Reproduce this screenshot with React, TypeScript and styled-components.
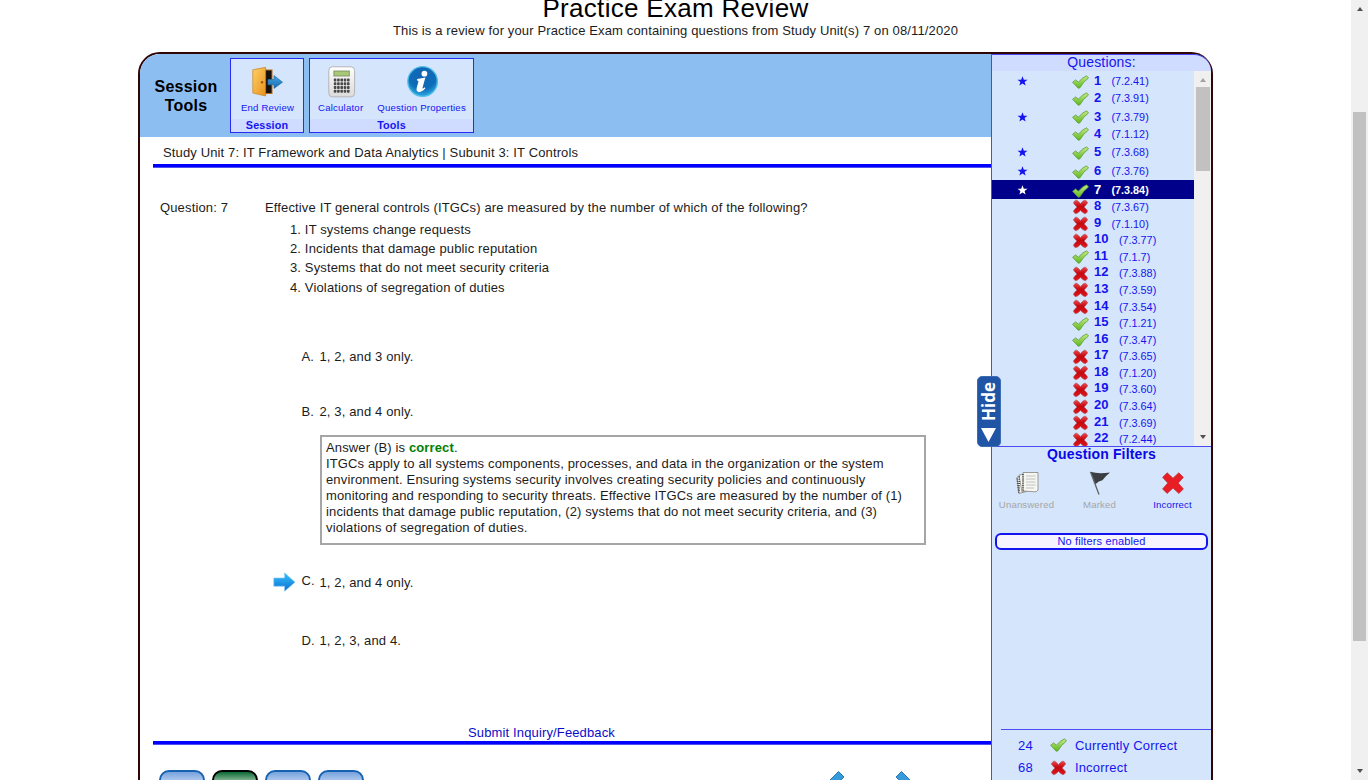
import React from "react";
import styled, { createGlobalStyle } from "styled-components";

const Global = createGlobalStyle`
  * { box-sizing: border-box; }
  html, body { margin: 0; padding: 0; background: #fff; overflow: hidden; }
  body { font-family: "Liberation Sans", Arial, sans-serif; font-size: 13px; letter-spacing: 0.14px; color: #1c1c1c; }
`;

const Page = styled.div`
  display: flex;
  width: 1368px;
  height: 780px;
  overflow: hidden;
`;
const Content = styled.div`
  flex: 1;
  min-width: 0;
  overflow: hidden;
`;
const Title = styled.h1`
  margin: -7px 0 0;
  height: 29px;
  line-height: 30px;
  font-size: 26px;
  font-weight: 400;
  letter-spacing: 0.3px;
  text-align: center;
  color: #000;
`;
const Subtitle = styled.p`
  margin: 0;
  height: 30px;
  line-height: 18px;
  text-align: center;
`;

const ScrollTrack = styled.div<{ $w: number; $pad: number }>`
  width: ${(p) => p.$w}px;
  flex: none;
  background: #f0f0f0;
  display: flex;
  flex-direction: column;
  align-items: center;
  padding: ${(p) => p.$pad}px 0;
`;
const Thumb = styled.div<{ $top: number; $h: number; $w: number }>`
  width: ${(p) => p.$w}px;
  height: ${(p) => p.$h}px;
  margin-top: ${(p) => p.$top}px;
  background: #c1c1c1;
`;
const ScrollArrow = styled.i<{ $down?: boolean; $color: string }>`
  width: 0;
  height: 0;
  border: 3.5px solid transparent;
  border-top: ${(p) => (p.$down ? `4px solid ${p.$color}` : "0")};
  border-bottom: ${(p) => (p.$down ? "0" : `4px solid ${p.$color}`)};
  margin-top: ${(p) => (p.$down ? "auto" : "0")};
`;

const Frame = styled.div`
  position: relative;
  display: flex;
  width: 1075px;
  height: 760px;
  margin-left: 138px;
  border: 2px solid #300505;
  border-radius: 22px;
`;
const Main = styled.main`
  width: 851px;
  flex: none;
  display: flex;
  flex-direction: column;
`;
const Toolbar = styled.div`
  height: 83px;
  flex: none;
  display: flex;
  align-items: flex-start;
  padding-top: 4px;
  background: #8dbef2;
  border-top-left-radius: 20px;
`;
const ToolbarTitle = styled.div`
  width: 90px;
  padding: 19px 0 0 2px;
  font-weight: 700;
  font-size: 16px;
  line-height: 19px;
  letter-spacing: 0.2px;
  text-align: center;
  color: #000;
`;
const Group = styled.div<{ $w: number }>`
  width: ${(p) => p.$w}px;
  height: 75px;
  margin-right: 5px;
  display: flex;
  flex-direction: column;
  border: 1px solid #2a2af5;
  background: #d5e5fb;
`;
const GroupTools = styled.div`
  flex: 1;
  display: flex;
  justify-content: center;
  gap: 14px;
  padding-left: 1px;
`;
const Tool = styled.div`
  display: flex;
  flex-direction: column;
  align-items: center;
  font-size: 9.6px;
  line-height: 12px;
  letter-spacing: 0.2px;
  color: #1414f5;
  white-space: nowrap;
  svg { margin: 5.5px 0 1px; height: 34px; display: block; }
  span { margin-top: 2px; }
`;
const GroupName = styled.div`
  height: 13px;
  line-height: 13px;
  font-size: 10.8px;
  font-weight: 700;
  text-align: center;
  color: #1414f5;
  background: #cfdcff;
`;
const Crumb = styled.div`
  height: 27px;
  flex: none;
  padding-left: 23px;
  line-height: 31px;
`;
const Rule = styled.div`
  height: 4px;
  flex: none;
  margin-left: 13px;
  background: linear-gradient(#00f 0 3px, #5050ee 3px);
`;
const QuestionRow = styled.div`
  display: flex;
  padding: 32px 0 0 20px;
  line-height: 16px;
`;
const QuestionLabel = styled.div`
  width: 105px;
`;
const Statements = styled.ol`
  margin: 4px 0 0.4px;
  padding: 0 0 0 25px;
  line-height: 19.2px;
  list-style: none;
`;
const Choices = styled.div`
  padding-left: 133px;
`;
const Choice = styled.div<{ $top: number }>`
  display: flex;
  height: 16px;
  margin-top: ${(p) => p.$top}px;
  line-height: 16px;
`;
const Marker = styled.div`
  width: 28.5px;
  svg { display: block; margin-top: -3.5px; }
`;
const Letter = styled.div<{ $raise?: boolean }>`
  width: 18px;
  margin-top: ${(p) => (p.$raise ? -2 : 0)}px;
`;
const Explanation = styled.div`
  width: 606px;
  height: 110px;
  margin: 15px 0 0 47px;
  padding: 3px 4px;
  border: 2px solid #a6a6a6;
  line-height: 16px;
  white-space: nowrap;
  b { color: #008000; }
`;
const Feedback = styled.a`
  margin: auto 0 0;
  height: 16px;
  line-height: 16px;
  padding-left: 328px;
  color: #0c0cc8;
`;
const Footer = styled.div`
  height: 65px;
  flex: none;
  display: flex;
  padding: 25px 0 0 19px;
`;
const FooterButton = styled.div<{ $green?: boolean }>`
  width: 46px;
  height: 40px;
  margin-right: 7px;
  border: 2px solid ${(p) => (p.$green ? "#000" : "#1763b2")};
  border-radius: 10px;
  background: ${(p) => (p.$green ? "linear-gradient(#0a6a35, #8cb898 9px, #b5d3bd)" : "linear-gradient(#76a2dc, #b0caee 9px, #d2e2f8)")};
`;
const Chevrons = styled.svg`
  margin: 0 0 0 442px;
`;

const Sidebar = styled.aside`
  flex: 1;
  min-width: 0;
  display: flex;
  flex-direction: column;
  border-left: 1px solid #4a4af0;
  background: #d5e5fb;
  border-top-right-radius: 20px;
  color: #1414f0;
`;
const SideHead = styled.div`
  height: 17px;
  flex: none;
  border-top: 1px solid #4a4af0;
  border-top-right-radius: 20px;
  background: #cfdcff;
  line-height: 14px;
  font-size: 14px;
  letter-spacing: 0.15px;
  text-align: center;
`;
const ListBox = styled.div`
  height: 376px;
  flex: none;
  display: flex;
  overflow: hidden;
  border-bottom: 1px solid #4a4af0;
`;
const List = styled.div`
  flex: 1;
  overflow: hidden;
`;
const Row = styled.div<{ $star: boolean; $on: boolean }>`
  display: flex;
  align-items: center;
  height: ${(p) => (p.$star ? 18.9 : 16.6)}px;
  padding-top: ${(p) => (p.$star ? 2 : 0)}px;
  background: ${(p) => (p.$on ? "#00008b" : "transparent")};
  color: ${(p) => (p.$on ? "#fff" : "inherit")};
  font-weight: ${(p) => (p.$on ? 700 : 400)};
`;
const Star = styled.div`
  width: 80px;
  padding-left: 25px;
  svg { display: block; }
`;
const Mark = styled.div`
  width: 22px;
  svg { display: block; margin-top: 1px; }
`;
const Num = styled.div<{ $wide: boolean; $raise: boolean }>`
  width: ${(p) => (p.$wide ? 25 : 17.5)}px;
  font-weight: 700;
  line-height: 15px;
  margin-top: ${(p) => (p.$raise ? -3 : -1)}px;
`;
const Code = styled.div`
  font-size: 10.8px;
  line-height: 14px;
  letter-spacing: 0;
`;
const FilterTitle = styled.div`
  height: 16px;
  line-height: 15px;
  font-size: 14px;
  font-weight: 700;
  text-align: center;
  color: #0808e8;
`;
const Filters = styled.div`
  display: flex;
  height: 70px;
  margin-left: -2px;
  padding-top: 8px;
`;
const Filter = styled.div<{ $off?: boolean }>`
  width: 73px;
  flex: none;
  display: flex;
  flex-direction: column;
  align-items: center;
  font-size: 9.6px;
  line-height: 12px;
  color: ${(p) => (p.$off ? "#a5a5a5" : "#1414f0")};
  svg { display: block; margin-bottom: 4px; }
`;
const FilterState = styled.div`
  height: 17px;
  margin: 0 3px;
  border: 2px solid #1414f0;
  border-radius: 6px;
  background: #f6f5ff;
  font-size: 11px;
  line-height: 13px;
  text-align: center;
`;
const Summary = styled.div`
  margin: 179px 0 0 9px;
  padding-top: 4px;
  border-top: 1px solid #4a4af0;
`;
const SummaryRow = styled.div`
  display: flex;
  align-items: center;
  height: 22.5px;
  padding-left: 17px;
  letter-spacing: 0.2px;
  svg { width: 17px; margin: 0 7.5px 0 17.5px; }
`;
const HideTab = styled.div`
  position: absolute;
  left: 837px;
  top: 322px;
  width: 24px;
  height: 71px;
  padding: 3px 1px 0 0;
  display: flex;
  flex-direction: column;
  align-items: center;
  border: 1px solid #3c6cb4;
  border-radius: 5px;
  background: #2055a6;
  color: #fff;
  span {
    height: 41px;
    writing-mode: vertical-rl;
    transform: rotate(180deg);
    font: 700 17px/22px "Open Sans", sans-serif;
    letter-spacing: 0;
  }
  svg { display: block; margin-top: 7px; }
`;

const Check = () => (
  <svg width="17" height="14" viewBox="0 0 17 14">
    <defs>
      <linearGradient id="ck" x1="0" y1="0" x2="0" y2="1">
        <stop offset="0" stopColor="#c5ea86" />
        <stop offset="1" stopColor="#5cb81c" />
      </linearGradient>
    </defs>
    <path d="M0.6 7.3 3.6 4.9 6.4 7.2 Q10 2.6 14.6 .8 L16.5 3 Q11.2 6.8 7.8 12.9 L6.2 13.2Z" fill="url(#ck)" stroke="#609a3c" strokeWidth=".8" strokeLinejoin="round" />
  </svg>
);
const Cross = () => (
  <svg width="17" height="16" viewBox="0 0 16 16" preserveAspectRatio="none">
    <defs>
      <linearGradient id="cr" x1="0" y1="0" x2="0" y2="1">
        <stop offset="0" stopColor="#f0484c" />
        <stop offset=".45" stopColor="#c40810" />
        <stop offset="1" stopColor="#e0161c" />
      </linearGradient>
    </defs>
    <path d="M3.3 1.3Q4.5.9 5.5 2L8 4.5 10.4 2Q11.6.9 12.9 1.4L14.5 3Q14.8 4.3 13.6 5.4L11.4 8 13.8 10.6Q14.9 11.8 14.3 13.1L13 14.5Q11.6 14.9 10.5 13.8L8 11.5 5.5 13.8Q4.3 14.9 3 14.5L1.6 13.1Q1.2 11.8 2.3 10.6L4.6 8 2.3 5.4Q1.2 4.3 1.6 3Z" fill="url(#cr)" stroke="#b25a62" strokeWidth=".7" />
  </svg>
);
const StarIcon = () => (
  <svg width="11" height="10" viewBox="0 0 11 10">
    <path d="M5.5.3 6.8 3.7 10.5 3.8 7.6 6 8.6 9.6 5.5 7.5 2.4 9.6 3.4 6 .5 3.8 4.2 3.7Z" fill="currentColor" />
  </svg>
);
const Door = () => (
  <svg width="34" viewBox="0 0 34 34">
    <defs>
      <linearGradient id="dr" x1="0" y1="0" x2="1" y2="1">
        <stop offset="0" stopColor="#ffd068" />
        <stop offset="1" stopColor="#e8921c" />
      </linearGradient>
      <linearGradient id="da" x1="0" y1="0" x2="0" y2="1">
        <stop offset="0" stopColor="#48a8e0" />
        <stop offset="1" stopColor="#1668b0" />
      </linearGradient>
    </defs>
    <path d="M14 4.5H22.5V29H14Z" fill="#b86c18" />
    <path d="M15 5.5H21.5V28H15Z" fill="#18120c" />
    <path d="M2.8 4.8 15.6 2.3V31L2.8 28Z" fill="url(#dr)" stroke="#c98220" strokeWidth=".7" />
    <circle cx="12" cy="17.3" r="1.2" fill="#9a5510" />
    <path d="M18 14.6H24V10.6L32.5 17.2 24 23.4V19.8H18Z" fill="url(#da)" stroke="#1f70ad" strokeWidth=".7" />
  </svg>
);
const Calculator = () => (
  <svg width="34" viewBox="0 0 34 34">
    <defs>
      <linearGradient id="cl" x1="0" y1="0" x2="0" y2="1">
        <stop offset="0" stopColor="#fff" />
        <stop offset="1" stopColor="#dadada" />
      </linearGradient>
    </defs>
    <rect x="4.8" y="1.8" width="25.8" height="30" rx="3.5" fill="url(#cl)" stroke="#b6b6b6" />
    <rect x="9.9" y="6" width="15.4" height="5" fill="#a8c878" stroke="#758b58" strokeWidth=".8" />
    {[13.4, 17.2, 21, 24.8].map((y) =>
      [9.8, 13.1, 16.4, 19.7, 23].map((x) => (
        <rect key={`${x}-${y}`} x={x} y={y} width="2.6" height="3" rx=".7" fill="#484848" />
      ))
    )}
  </svg>
);
const Info = () => (
  <svg width="34" viewBox="0 0 34 34">
    <defs>
      <radialGradient id="in" cx=".5" cy=".3" r=".75">
        <stop offset="0" stopColor="#1265b4" />
        <stop offset=".6" stopColor="#0e6cb8" />
        <stop offset="1" stopColor="#35b6ec" />
      </radialGradient>
    </defs>
    <circle cx="17.6" cy="16.5" r="14.8" fill="url(#in)" stroke="#55bfe8" strokeWidth="1.3" />
    <circle cx="19.4" cy="8.7" r="2.9" fill="#fff" />
    <path d="M12.2 13.9Q16.5 13.2 20.4 12.4L17.6 22.5Q17.2 24.4 19.8 22.2L20.4 23.3Q16.6 27.6 13.4 27 10.8 26.2 11.8 22.6L13.4 16.8Q13.6 15.4 12 15.4Z" fill="#fff" />
  </svg>
);
const Papers = () => (
  <svg width="26" height="24" viewBox="0 0 26 24">
    <g fill="#f5f5f2" stroke="#85857f" strokeWidth=".8">
      <path d="M3 6 14 4V20L5 22.5Z" />
      <path d="M5 4 16 2.5V19L8 21Z" />
      <path d="M9 1.5H24V19Q23 21 21 20.8L9 20Z" />
    </g>
    <path d="M12 5H21.5M12 8H21.5M12 11H21.5M12 14H21.5M12 17H20" stroke="#b4b4b0" strokeWidth=".8" />
    <path d="M9 3V20M5.2 5.5V21M3 7.5 4.8 22" stroke="#444" strokeWidth="1.5" strokeDasharray="1 1.2" />
  </svg>
);
const Flag = () => (
  <svg width="22" height="24" viewBox="0 0 22 24">
    <path d="M1.5.8Q9 3.2 21 1.5Q16 5.5 13.4 9.2 9.8 9.5 6.4 13.2Z" fill="#3b3f41" />
    <path d="M1.5 1 10 23.4" stroke="#606466" strokeWidth="1.3" />
  </svg>
);
const RedX = () => (
  <svg width="24" height="24" viewBox="0 0 24 24">
    <path d="M6.2 1.8 12 7.2 17.8 1.8 22.4 6.3 17.2 12.1 22.4 17.9 17.9 22.4 12 17.1 6.1 22.4 1.6 17.9 6.8 12.1 1.6 6.3Z" fill="#e81e24" stroke="#bd343a" strokeWidth=".8" strokeLinejoin="round" />
  </svg>
);
const Arrow = () => (
  <svg width="23" height="20" viewBox="0 0 23 20">
    <defs>
      <linearGradient id="ar" x1="0" y1="0" x2="0" y2="1">
        <stop offset="0" stopColor="#38c4ff" />
        <stop offset="1" stopColor="#0a6cd0" />
      </linearGradient>
    </defs>
    <path d="M.8 6H11.6V.8L22 10.2 11.6 19.2V14.2H.8Z" fill="url(#ar)" stroke="#80c8f4" strokeWidth=".6" />
  </svg>
);

const questions: [number, string, boolean, boolean][] = [
  [1, "7.2.41", true, true],
  [2, "7.3.91", true, false],
  [3, "7.3.79", true, true],
  [4, "7.1.12", true, false],
  [5, "7.3.68", true, true],
  [6, "7.3.76", true, true],
  [7, "7.3.84", true, true],
  [8, "7.3.67", false, false],
  [9, "7.1.10", false, false],
  [10, "7.3.77", false, false],
  [11, "7.1.7", true, false],
  [12, "7.3.88", false, false],
  [13, "7.3.59", false, false],
  [14, "7.3.54", false, false],
  [15, "7.1.21", true, false],
  [16, "7.3.47", true, false],
  [17, "7.3.65", false, false],
  [18, "7.1.20", false, false],
  [19, "7.3.60", false, false],
  [20, "7.3.64", false, false],
  [21, "7.3.69", false, false],
  [22, "7.2.44", false, false],
];

export default function App() {
  return (
    <Page>
      <Global />
      <Content>
        <Title>Practice Exam Review</Title>
        <Subtitle>This is a review for your Practice Exam containing questions from Study Unit(s) 7 on 08/11/2020</Subtitle>
        <Frame>
          <Main>
            <Toolbar>
              <ToolbarTitle>Session<br />Tools</ToolbarTitle>
              <Group $w={74}>
                <GroupTools>
                  <Tool><Door /><span>End Review</span></Tool>
                </GroupTools>
                <GroupName>Session</GroupName>
              </Group>
              <Group $w={165}>
                <GroupTools>
                  <Tool><Calculator /><span>Calculator</span></Tool>
                  <Tool><Info /><span>Question Properties</span></Tool>
                </GroupTools>
                <GroupName>Tools</GroupName>
              </Group>
            </Toolbar>
            <Crumb>Study Unit 7: IT Framework and Data Analytics | Subunit 3: IT Controls</Crumb>
            <Rule />
            <QuestionRow>
              <QuestionLabel>Question: 7</QuestionLabel>
              <div>
                Effective IT general controls (ITGCs) are measured by the number of which of the following?
                <Statements>
                  <li>1. IT systems change requests</li>
                  <li>2. Incidents that damage public reputation</li>
                  <li>3. Systems that do not meet security criteria</li>
                  <li>4. Violations of segregation of duties</li>
                </Statements>
              </div>
            </QuestionRow>
            <Choices>
              <Choice $top={52}><Marker /><Letter>A.</Letter>1, 2, and 3 only.</Choice>
              <Choice $top={39}><Marker /><Letter>B.</Letter>2, 3, and 4 only.</Choice>
              <Explanation>
                Answer (B) is <b>correct</b>.<br />
                ITGCs apply to all systems components, processes, and data in the organization or the system<br />
                environment. Ensuring systems security involves creating security policies and continuously<br />
                monitoring and responding to security threats. Effective ITGCs are measured by the number of (1)<br />
                incidents that damage public reputation, (2) systems that do not meet security criteria, and (3)<br />
                violations of segregation of duties.
              </Explanation>
              <Choice $top={30}><Marker><Arrow /></Marker><Letter $raise>C.</Letter>1, 2, and 4 only.</Choice>
              <Choice $top={42}><Marker /><Letter>D.</Letter>1, 2, 3, and 4.</Choice>
            </Choices>
            <Feedback>Submit Inquiry/Feedback</Feedback>
            <Rule />
            <Footer>
              <FooterButton />
              <FooterButton $green />
              <FooterButton />
              <FooterButton />
              <Chevrons width="110" height="40" viewBox="0 0 110 40">
                <path d="M25.5 1.5 31 7 18.5 19 31 31.5 25.5 36.5 8 19Z" fill="#369bd8" stroke="#2a7ab8" />
                <path d="M88.5 1.5 83 7 95.5 19 83 31.5 88.5 36.5 106 19Z" fill="#369bd8" stroke="#2a7ab8" />
              </Chevrons>
            </Footer>
          </Main>
          <Sidebar>
            <SideHead>Questions:</SideHead>
            <ListBox>
              <List>
                {questions.map(([n, code, ok, star]) => (
                  <Row key={n} $star={star} $on={n === 7}>
                    <Star>{star && <StarIcon />}</Star>
                    <Mark>{ok ? <Check /> : <Cross />}</Mark>
                    <Num $wide={n > 9} $raise={n > 7}>{n}</Num>
                    <Code>({code})</Code>
                  </Row>
                ))}
              </List>
              <ScrollTrack $w={17} $pad={7}>
                <ScrollArrow $color="#a3a3a3" />
                <Thumb $top={5} $h={84} $w={14} />
                <ScrollArrow $down $color="#505050" />
              </ScrollTrack>
            </ListBox>
            <FilterTitle>Question Filters</FilterTitle>
            <Filters>
              <Filter $off><Papers />Unanswered</Filter>
              <Filter $off><Flag />Marked</Filter>
              <Filter><RedX />Incorrect</Filter>
            </Filters>
            <FilterState>No filters enabled</FilterState>
            <Summary>
              <SummaryRow>24<Check />Currently Correct</SummaryRow>
              <SummaryRow>68<Cross />Incorrect</SummaryRow>
            </Summary>
          </Sidebar>
          <HideTab>
            <span>Hide</span>
            <svg width="15" height="14" viewBox="0 0 15 14"><path d="M0 0H15L7.5 14Z" fill="#fff" /></svg>
          </HideTab>
        </Frame>
      </Content>
      <ScrollTrack $w={17} $pad={7}>
        <ScrollArrow $color="#505050" />
        <Thumb $top={101} $h={529} $w={13} />
        <ScrollArrow $down $color="#505050" />
      </ScrollTrack>
    </Page>
  );
}
